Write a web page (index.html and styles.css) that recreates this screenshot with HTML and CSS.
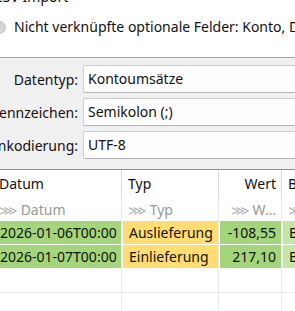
FILE: index.html
```html
<!DOCTYPE html>
<html lang="de">
<head>
    <meta charset="UTF-8">
    <meta name="viewport" content="width=device-width, initial-scale=1.0">
    <title>CSV Import</title>
    <link rel="stylesheet" href="styles.css">
</head>
<body>
    <div class="top">
        <div class="title">CSV Import</div>
        <div class="notice">
            <span class="radio"></span>
            <span class="notice-text">Nicht verknüpfte optionale Felder: Konto, Datum der Buchung</span>
        </div>
    </div>

    <div class="settings">
        <div class="field">
            <label>Datentyp:</label>
            <div class="input">Kontoumsätze</div>
        </div>
        <div class="field">
            <label>Trennzeichen:</label>
            <div class="input">Semikolon (;)</div>
        </div>
        <div class="field">
            <label>Enkodierung:</label>
            <div class="input">UTF-8</div>
        </div>
    </div>

    <div class="table">
        <div class="row head">
            <div class="cell">Datum</div>
            <div class="cell">Typ</div>
            <div class="cell right">Wert</div>
            <div class="cell">Buchungstext</div>
        </div>
        <div class="row filter">
            <div class="cell"><span class="arrows">⋙</span> Datum</div>
            <div class="cell"><span class="arrows">⋙</span> Typ</div>
            <div class="cell right"><span class="arrows">⋙</span> W…</div>
            <div class="cell"><span class="arrows">⋙</span> Buchungstext</div>
        </div>
        <div class="row data">
            <div class="cell"><span class="fill ok">2026-01-06T00:00</span></div>
            <div class="cell"><span class="fill warn">Auslieferung</span></div>
            <div class="cell"><span class="fill ok right">-108,55</span></div>
            <div class="cell"><span class="fill light">Einkauf</span></div>
        </div>
        <div class="row data">
            <div class="cell"><span class="fill ok">2026-01-07T00:00</span></div>
            <div class="cell"><span class="fill warn">Einlieferung</span></div>
            <div class="cell"><span class="fill ok right">217,10</span></div>
            <div class="cell"><span class="fill light">Einzahlung</span></div>
        </div>
        <div class="row empty">
            <div class="cell"></div>
            <div class="cell"></div>
            <div class="cell"></div>
            <div class="cell"></div>
        </div>
        <div class="row empty">
            <div class="cell"></div>
            <div class="cell"></div>
            <div class="cell"></div>
            <div class="cell"></div>
        </div>
    </div>
</body>
</html>
```

FILE: styles.css
```css
* {
    margin: 0;
    padding: 0;
    box-sizing: border-box;
}
body {
    font-family: "Noto Sans", "Open Sans", sans-serif;
    font-size: 14px;
    color: #111;
    background: #fff;
    overflow: hidden;
    width: 295px;
    height: 311px;
}
.top {
    display: flex;
    flex-direction: column;
    height: 57px;
    margin-left: -7px;
    white-space: nowrap;
}
.title {
    line-height: 20px;
    margin-top: -13px;
    padding-left: 1px;
}
.notice {
    display: flex;
    align-items: center;
    gap: 8px;
    margin-top: 10px;
    line-height: 20px;
}
.radio {
    width: 13px;
    height: 13px;
    border-radius: 50%;
    background: #d4d4d4;
    border: 1px solid #c4c4c4;
    flex: none;
}
.settings {
    background: #f0f0f0;
    border-top: 1px solid #a3a3a3;
    border-bottom: 1px solid #8e8e8e;
    padding: 7px 0 10px 0;
    display: flex;
    flex-direction: column;
    gap: 5px;
    margin-left: -40px;
    width: 520px;
}
.field {
    display: grid;
    grid-template-columns: 118px 1fr;
    column-gap: 5px;
    align-items: center;
}
.field label {
    text-align: right;
    white-space: nowrap;
}
.input {
    height: 28px;
    line-height: 26px;
    padding-left: 4px;
    background: #fdfdfd;
    border: 1px solid #cdcdcd;
    border-bottom-color: #b4b4b4;
    border-radius: 2px;
}
.table {
    margin-left: -9px;
    width: 500px;
}
.row {
    display: grid;
    grid-template-columns: 131px 97px 63px 100px;
}
.cell {
    border-right: 1px solid #e6eaf2;
    white-space: nowrap;
    overflow: hidden;
}
.head .cell {
    height: 28px;
    line-height: 28px;
    padding: 0 5px 0 8px;
    border-right-color: #dadada;
}
.head .cell:nth-child(2),
.head .cell:nth-child(4),
.filter .cell:nth-child(2),
.filter .cell:nth-child(4) {
    padding-left: 6px;
}
.filter .cell {
    height: 23px;
    line-height: 23px;
    padding: 0 5px 0 8px;
    color: #999;
}
.arrows {
    color: #b4b4b4;
    font-size: 13px;
}
.right {
    text-align: right;
}
.data .cell {
    height: 24px;
    padding: 0 0 1px 1px;
}
.data .cell:first-child {
    padding-left: 0;
}
.fill {
    display: block;
    height: 23px;
    line-height: 23px;
    padding: 0 5px 0 6px;
}
.data .cell:first-child .fill {
    padding-left: 9px;
}
.ok {
    background: #a3d67a;
}
.warn {
    background: #ffdd72;
}
.light {
    background: #c4e6a6;
}
.empty .cell {
    height: 24px;
    border-bottom: 1px solid #ececec;
}
```
